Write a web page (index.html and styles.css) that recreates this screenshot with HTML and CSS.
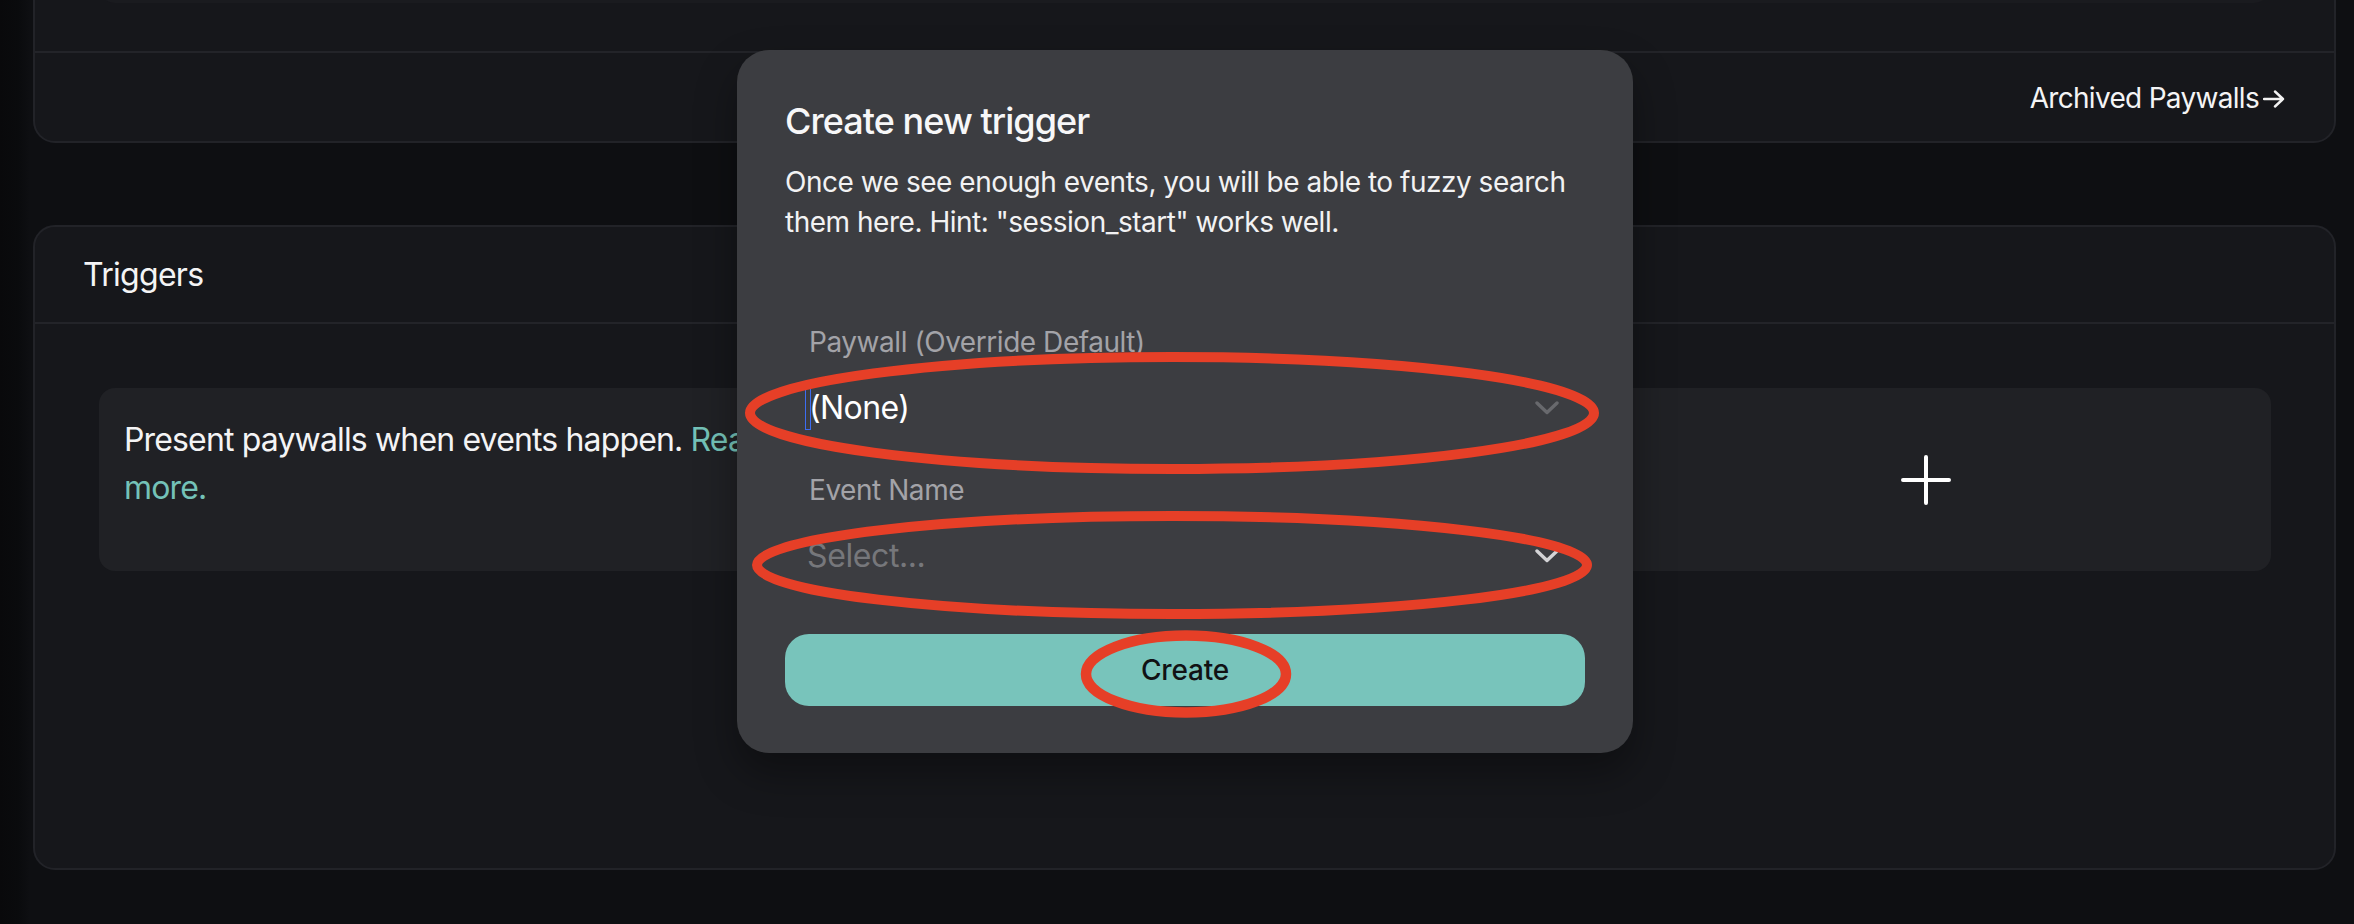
FILE: index.html
```html
<!DOCTYPE html>
<html lang="en">
<head>
<meta charset="utf-8">
<title>Triggers</title>
<link rel="stylesheet" href="styles.css">
</head>
<body>
<div class="page">
  <main class="main">
    <section class="card card-top">
      <div class="card-top-body">
        <div class="prev-box"></div>
      </div>
      <div class="card-top-footer">
        <a class="archived-link">Archived Paywalls<svg class="arrow" viewBox="0 0 22 18" width="22" height="18"><path d="M1 9 H20 M12 1.5 L20 9 L12 16.5" fill="none" stroke="#f2f2f2" stroke-width="2.4" stroke-linecap="round" stroke-linejoin="round"/></svg></a>
      </div>
    </section>

    <section class="card card-triggers">
      <header class="card-header">Triggers</header>
      <div class="card-body">
        <div class="trigger-box">
          <p class="trigger-text">Present paywalls when events happen. <a class="link">Read more.</a></p>
          <div class="plus-col">
            <svg viewBox="0 0 50 50" width="50" height="50"><path d="M25 2 V48 M2 25 H48" stroke="#ffffff" stroke-width="4" stroke-linecap="round"/></svg>
          </div>
        </div>
      </div>
    </section>
  </main>

  <div class="modal">
    <h2 class="modal-title">Create new trigger</h2>
    <p class="modal-desc">Once we see enough events, you will be able to fuzzy search them here. Hint: "session_start" works well.</p>
    <div class="form">
      <label class="field-label">Paywall (Override Default)</label>
      <div class="select">
        <span class="select-value"><span class="caret"></span>(None)</span>
        <svg class="chevron chevron-dim" viewBox="0 0 24 14" width="24" height="14"><path d="M2 2 L12 11.5 L22 2" fill="none" stroke="currentColor" stroke-width="3.4" stroke-linecap="round" stroke-linejoin="round"/></svg>
      </div>
      <label class="field-label field-label-2">Event Name</label>
      <div class="select">
        <span class="select-placeholder">Select...</span>
        <svg class="chevron chevron-light" viewBox="0 0 24 14" width="24" height="14"><path d="M2 2 L12 11.5 L22 2" fill="none" stroke="currentColor" stroke-width="3.4" stroke-linecap="round" stroke-linejoin="round"/></svg>
      </div>
    </div>
    <button class="create-btn">Create</button>
  </div>

  <svg class="annotations" viewBox="0 0 2354 924" width="2354" height="924">
    <ellipse cx="1172" cy="413" rx="422" ry="56" fill="none" stroke="#e63f27" stroke-width="10"/>
    <ellipse cx="1172" cy="565" rx="415" ry="49" fill="none" stroke="#e63f27" stroke-width="10"/>
    <ellipse cx="1186" cy="674" rx="100" ry="38.5" fill="none" stroke="#e63f27" stroke-width="10.5"/>
  </svg>
</div>
</body>
</html>
```

FILE: styles.css
```css
* {
  box-sizing: border-box;
}

html, body {
  margin: 0;
  padding: 0;
}

body {
  width: 2354px;
  height: 924px;
  overflow: hidden;
  background: #0d0e11;
  font-family: Inter, "Noto Sans", "Liberation Sans", sans-serif;
  color: #f4f4f5;
  -webkit-font-smoothing: antialiased;
}

.page {
  position: relative;
  width: 2354px;
  height: 924px;
  background: linear-gradient(to right, #09090b 0, #0a0b0d 18px, #0e0f12 30px, #0e0f12 100%);
}

.main {
  display: flex;
  flex-direction: column;
  gap: 82px;
  padding: 0 18px 0 33px;
}

.card {
  background: #16171b;
  border: 2px solid #222328;
  border-radius: 22px;
}

.card-top {
  margin-top: -60px;
}

.card-top-body {
  height: 111px;
  padding: 0 64px;
  border-bottom: 2px solid #232429;
}

.prev-box {
  height: 61px;
  background: #1a1b1f;
  border-radius: 0 0 16px 16px;
}

.card-top-footer {
  height: 88px;
  display: flex;
  align-items: center;
  justify-content: flex-end;
  padding-right: 49px;
  padding-top: 2px;
}

.archived-link {
  display: flex;
  align-items: center;
  gap: 4px;
  font-size: 28px;
  line-height: 40px;
  color: #f4f4f5;
  letter-spacing: -0.7px;
}

.arrow {
  display: block;
  margin-top: 1px;
}

.card-triggers {
  height: 645px;
}

.card-header {
  height: 97px;
  display: flex;
  align-items: center;
  padding: 0 48px;
  font-size: 32px;
  line-height: 48px;
  letter-spacing: -0.7px;
  border-bottom: 2px solid #232429;
}

.card-body {
  padding: 64px 63px 0 64px;
}

.trigger-box {
  height: 183px;
  display: flex;
  background: #202125;
  border-radius: 16px;
  padding: 28px 24px 24px 25px;
}

.trigger-text {
  margin: 0;
  width: 690px;
  font-size: 32px;
  line-height: 48px;
  color: #f4f4f5;
  letter-spacing: -0.85px;
}

.link {
  color: #74c2b8;
}

.plus-col {
  margin-left: auto;
  margin-top: -4px;
  width: 642px;
  display: flex;
  align-items: center;
  justify-content: center;
}

.plus-col svg {
  display: block;
}

/* Modal */
.modal {
  position: absolute;
  left: 737px;
  top: 50px;
  width: 896px;
  padding: 43px 48px 47px;
  background: #3c3d41;
  border-radius: 32px;
  box-shadow: 0 20px 40px rgba(0, 0, 0, 0.35);
}

.modal-title {
  margin: 0;
  font-size: 36px;
  line-height: 56px;
  font-weight: 500;
  color: #f7f7f8;
  letter-spacing: -0.95px;
}

.modal-desc {
  margin: 13px 0 0;
  font-size: 28px;
  line-height: 40px;
  color: #f2f2f3;
  letter-spacing: -0.48px;
}

.form {
  margin-top: 80px;
  padding: 0 24px;
  display: flex;
  flex-direction: column;
}

.field-label {
  display: block;
  font-size: 28px;
  line-height: 40px;
  color: #a3a3a8;
  letter-spacing: -0.45px;
}

.field-label-2 {
  margin-top: 16px;
}

.select {
  height: 92px;
  display: flex;
  align-items: center;
  justify-content: space-between;
}

.select-value {
  display: flex;
  align-items: center;
  font-size: 32px;
  line-height: 48px;
  color: #ffffff;
  letter-spacing: -0.6px;
}

.caret {
  display: inline-block;
  width: 6px;
  height: 44px;
  border: 1.5px solid #3d6df2;
  margin-left: -4px;
  margin-right: -2px;
}

.select-placeholder {
  font-size: 32px;
  line-height: 48px;
  color: #76777b;
  letter-spacing: -0.4px;
  margin-left: -2px;
}

.chevron {
  display: block;
  margin-right: 2px;
}

.chevron-dim {
  color: #68696d;
}

.chevron-light {
  color: #d4d4d6;
}

.create-btn {
  display: block;
  width: 100%;
  height: 72px;
  margin-top: 32px;
  border: 0;
  border-radius: 24px;
  background: #78c4bb;
  color: #111214;
  font-family: Inter, "Noto Sans", "Liberation Sans", sans-serif;
  font-size: 28px;
  font-weight: 500;
  letter-spacing: -0.2px;
}

.annotations {
  position: absolute;
  left: 0;
  top: 0;
  pointer-events: none;
}
```
